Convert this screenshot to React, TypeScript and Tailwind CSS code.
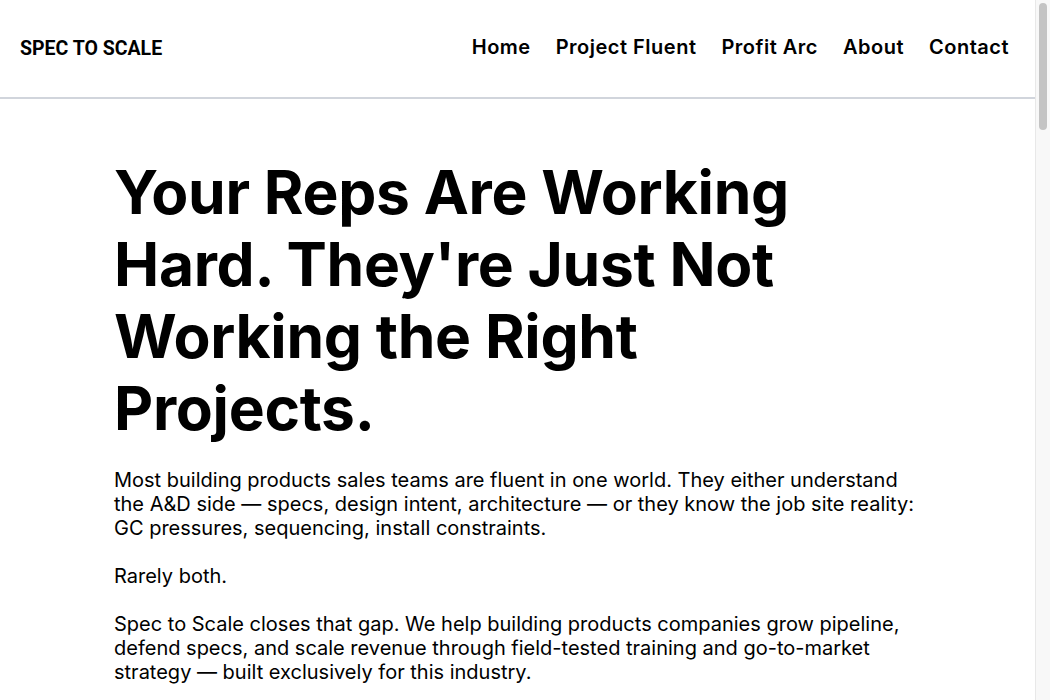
import React from "react";

export default function App() {
  const links = ["Home", "Project Fluent", "Profit Arc", "About", "Contact"];
  return (
    <div className="flex h-[700px] overflow-hidden bg-white text-black" style={{ fontFamily: "Inter, sans-serif" }}>
      <div className="min-w-0 flex-1">
        <header className="flex h-[99px] items-center justify-between border-b-2 border-gray-300 pb-[4px] pl-5 pr-[26px]">
          <div className="mt-[4px] text-[19.5px] font-bold" style={{ fontFamily: "Roboto, sans-serif" }}>
            SPEC TO SCALE
          </div>
          <nav className="flex items-center gap-[25px] text-[20px] font-semibold tracking-[0.5px]">
            {links.map((l) => (
              <a key={l} href="#" className="text-black">
                {l}
              </a>
            ))}
          </nav>
        </header>
        <main className="mx-auto max-w-[807px] pt-[57px] pb-24">
          <h1 className="max-w-[760px] text-[60.5px] font-bold leading-[72px] tracking-[-0.3px]">
            Your Reps Are Working Hard. They're Just Not Working the Right Projects.
          </h1>
          <div className="mt-[24px] space-y-6 text-[20px] leading-6">
            <p>
              Most building products sales teams are fluent in one world. They either understand the A&amp;D side —
              specs, design intent, architecture — or they know the job site reality: GC pressures, sequencing, install
              constraints.
            </p>
            <p>Rarely both.</p>
            <p>
              Spec to Scale closes that gap. We help building products companies grow pipeline, defend specs, and scale
              revenue through field-tested training and go-to-market strategy — built exclusively for this industry.
            </p>
          </div>
        </main>
      </div>
      <div className="relative w-[15px] shrink-0 border-l border-[#e8e8e8] bg-[#f8f8f8]">
        <div className="absolute left-[3px] top-[3px] h-[127px] w-[8px] rounded-full bg-[#c4c4c4]" />
      </div>
    </div>
  );
}
